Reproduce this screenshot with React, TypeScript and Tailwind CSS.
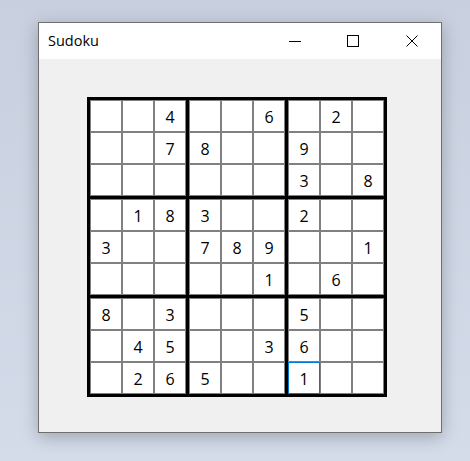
import React from "react";

// 0 = empty cell
const board: number[][] = [
  [0, 0, 4, 0, 0, 6, 0, 2, 0],
  [0, 0, 7, 8, 0, 0, 9, 0, 0],
  [0, 0, 0, 0, 0, 0, 3, 0, 8],
  [0, 1, 8, 3, 0, 0, 2, 0, 0],
  [3, 0, 0, 7, 8, 9, 0, 0, 1],
  [0, 0, 0, 0, 0, 1, 0, 6, 0],
  [8, 0, 3, 0, 0, 0, 5, 0, 0],
  [0, 4, 5, 0, 0, 3, 6, 0, 0],
  [0, 2, 6, 5, 0, 0, 1, 0, 0],
];

const focused = { row: 8, col: 6 };

const Cell: React.FC<{ row: number; col: number }> = ({ row, col }) => {
  const value = board[row][col];
  const isFocused = row === focused.row && col === focused.col;
  return (
    <div
      className={`w-[32px] h-[32px] flex justify-center items-center pt-[1px] bg-white border text-[16px] text-black ${
        isFocused ? "border-[#0078d7]" : "border-[#808080]"
      }`}
    >
      {value !== 0 ? value : ""}
    </div>
  );
};

const Block: React.FC<{ br: number; bc: number }> = ({ br, bc }) => {
  const cells = [];
  for (let r = 0; r < 3; r++) {
    for (let c = 0; c < 3; c++) {
      cells.push(<Cell key={`${r}-${c}`} row={br * 3 + r} col={bc * 3 + c} />);
    }
  }
  return <div className="grid grid-cols-3">{cells}</div>;
};

const TitleButtons = () => (
  <div className="flex h-full">
    <div className="w-[58px] h-full flex items-center justify-center">
      <svg width="12" height="12" viewBox="0 0 12 12">
        <line x1="0" y1="6.5" x2="12" y2="6.5" stroke="#000" strokeWidth="1" />
      </svg>
    </div>
    <div className="w-[58px] h-full flex items-center justify-center">
      <svg width="12" height="12" viewBox="0 0 12 12">
        <rect x="0.5" y="0.5" width="11" height="11" fill="none" stroke="#000" strokeWidth="1" />
      </svg>
    </div>
    <div className="w-[59px] h-full flex items-center justify-center">
      <svg width="12" height="12" viewBox="0 0 12 12">
        <line x1="0.5" y1="0.5" x2="11.5" y2="11.5" stroke="#000" strokeWidth="1" />
        <line x1="11.5" y1="0.5" x2="0.5" y2="11.5" stroke="#000" strokeWidth="1" />
      </svg>
    </div>
  </div>
);

export default function App() {
  const blocks = [];
  for (let br = 0; br < 3; br++) {
    for (let bc = 0; bc < 3; bc++) {
      blocks.push(<Block key={`${br}-${bc}`} br={br} bc={bc} />);
    }
  }

  return (
    <div
      className="w-[470px] h-[461px] pl-[38px] pt-[22px] bg-gradient-to-b from-[#c8d0df] to-[#d4dcea]"
      style={{ fontFamily: '"Open Sans", "Noto Sans", sans-serif' }}
    >
      <div className="w-[404px] h-[411px] border border-[#6f6f6f] bg-[#f0f0f0] flex flex-col shadow-[0_4px_16px_rgba(0,0,0,0.25)]">
        {/* title bar */}
        <div className="h-[36px] bg-white flex items-center justify-between">
          <span className="pl-[9px] text-[14.5px] text-black">Sudoku</span>
          <TitleButtons />
        </div>

        {/* board */}
        <div className="pl-[48px] pt-[38px]">
          <div className="w-[300px] h-[300px] bg-black p-[3px] grid grid-cols-3 gap-[3px]">
            {blocks}
          </div>
        </div>
      </div>
    </div>
  );
}
